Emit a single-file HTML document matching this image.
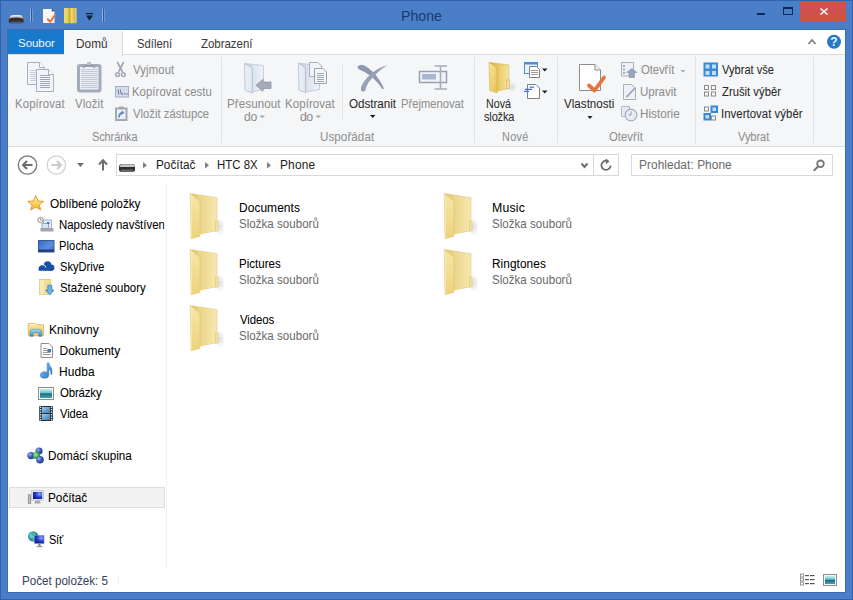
<!DOCTYPE html>
<html><head><meta charset="utf-8">
<style>
*{margin:0;padding:0;box-sizing:border-box}
html,body{width:853px;height:600px;overflow:hidden;background:#4a7fc8;font-family:"Liberation Sans",sans-serif;font-size:11.5px;color:#1e1e1e}
.a{position:absolute}
.t{position:absolute;white-space:pre;line-height:16px;font-family:"Liberation Sans",sans-serif;-webkit-text-stroke:0.05px currentColor}
svg{position:absolute;overflow:visible}
#frame{position:absolute;left:0;top:0;width:853px;height:600px;background:#4a7fc8;border:1px solid #3063ab}
#tabs{left:8px;top:30px;width:837px;height:25px;background:#fff;border-bottom:1px solid #dadbdc}
#soubor{left:8px;top:30px;width:56px;height:24px;background:#1979ca}
#domu{left:64px;top:31px;width:59px;height:25px;background:#f5f6f7;border-right:1px solid #dadbdc}
#ribbon{left:8px;top:55px;width:837px;height:92px;background:#f5f6f7;border-bottom:1px solid #dadbdc}
.sep{position:absolute;width:1px;background:#e2e3e4}
#addr{left:8px;top:147px;width:837px;height:36px;background:#fff}
#main{left:8px;top:183px;width:837px;height:409px;background:#fff}
#navsep{left:166px;top:184px;width:1px;height:384px;background:#f2f2f2}
#abox{left:116px;top:154px;width:478px;height:22px;border:1px solid #d9d9d9;background:#fff}
#rbox{left:593px;top:154px;width:26px;height:22px;border:1px solid #d9d9d9;background:#fff}
#sbox{left:631px;top:154px;width:202px;height:22px;border:1px solid #d9d9d9;background:#fff}
#selnav{left:9px;top:487px;width:156px;height:21px;background:#f2f2f2;border:1px solid #dedede}
#close{left:800px;top:1px;width:46px;height:20px;background:#cf524c}
#cborder{left:7px;top:29px;width:839px;height:564px;border:1px solid #3c6cb2}

</style></head><body>
<div id="frame"></div>
<div class="a" id="cborder"></div>
<div class="a" id="close"></div>
<div class="a" id="tabs"></div>
<div class="a" id="soubor"></div>
<div class="a" id="ribbon"></div>
<div class="a" id="domu"></div>
<div class="sep" style="left:221px;top:57px;height:86px"></div>
<div class="sep" style="left:342px;top:65px;height:54px"></div>
<div class="sep" style="left:474px;top:57px;height:86px"></div>
<div class="sep" style="left:557px;top:57px;height:86px"></div>
<div class="sep" style="left:695px;top:57px;height:86px"></div>
<div class="sep" style="left:813px;top:57px;height:86px"></div>
<div class="a" id="addr"></div>
<div class="a" id="main"></div>
<div class="a" id="navsep"></div>
<div class="a" id="abox"></div>
<div class="a" id="rbox"></div>
<div class="a" id="sbox"></div>
<div class="a" id="selnav"></div>
<div class="a" id="stsep" style="left:118px;top:575px;width:1px;height:11px;background:#f2f2f2"></div>

<svg style="left:0;top:0" width="853" height="600" viewBox="0 0 853 600">
<defs>
<linearGradient id="gFold" x1="0" y1="0" x2="1" y2="0"><stop offset="0" stop-color="#f6e39b"/><stop offset="1" stop-color="#ecd07a"/></linearGradient>
<linearGradient id="gBack" x1="0" y1="0" x2="1" y2="0"><stop offset="0" stop-color="#e2c265"/><stop offset="0.5" stop-color="#efd888"/><stop offset="1" stop-color="#f3e3a6"/></linearGradient>
<linearGradient id="gNF" x1="0" y1="0" x2="1" y2="0"><stop offset="0" stop-color="#f2d877"/><stop offset="1" stop-color="#e9c24f"/></linearGradient>
<linearGradient id="gNB" x1="0" y1="0" x2="1" y2="0"><stop offset="0" stop-color="#d9a93a"/><stop offset="0.45" stop-color="#f0d478"/><stop offset="1" stop-color="#f6e7a8"/></linearGradient>
<linearGradient id="gGF" x1="0" y1="0" x2="1" y2="0"><stop offset="0" stop-color="#eef2f9"/><stop offset="1" stop-color="#dfe6f1"/></linearGradient>
<linearGradient id="gGB" x1="0" y1="0" x2="1" y2="0"><stop offset="0" stop-color="#c2ccdc"/><stop offset="0.45" stop-color="#dde4ef"/><stop offset="1" stop-color="#eef2f8"/></linearGradient>
<radialGradient id="gShadow" cx="0.5" cy="0.5" r="0.5"><stop offset="0" stop-color="#9aa6bd" stop-opacity="0.55"/><stop offset="1" stop-color="#9aa6bd" stop-opacity="0"/></radialGradient>
<linearGradient id="gStar" x1="0" y1="0" x2="0" y2="1"><stop offset="0" stop-color="#fff3a0"/><stop offset="1" stop-color="#f3b42a"/></linearGradient>
<linearGradient id="gDesk" x1="0" y1="0" x2="1" y2="1"><stop offset="0" stop-color="#3566c4"/><stop offset="0.6" stop-color="#5b8fe0"/><stop offset="1" stop-color="#2f5fb8"/></linearGradient>
<linearGradient id="gPic" x1="0" y1="0" x2="0" y2="1"><stop offset="0" stop-color="#dff3fb"/><stop offset="0.45" stop-color="#8fcbe0"/><stop offset="1" stop-color="#2b6f7a"/></linearGradient>
</defs>

<!-- ===== title bar ===== -->
<defs><linearGradient id="drvTop" x1="0" y1="0" x2="0" y2="1"><stop offset="0" stop-color="#f2f2f2"/><stop offset="1" stop-color="#8a8a8a"/></linearGradient></defs>
<path d="M8.8,19.5 Q8.8,15.5 13,15.2 H19.3 Q23.5,15.5 23.5,19.5 V21.5 Q23.5,23.2 21.8,23.2 H10.5 Q8.8,23.2 8.8,21.5 Z" fill="#2e2e2e"/>
<path d="M9,19.2 Q9.5,15.2 13,15.1 H19.3 Q23,15.2 23.4,19.2 Q22,17.6 16.2,17.6 Q10.4,17.6 9,19.2 Z" fill="url(#drvTop)"/>
<path d="M10.5,22.2 H22" stroke="#6f6f6f" stroke-width="1"/>
<rect x="30" y="9" width="1" height="13" fill="#8fb0e0"/><rect x="31" y="9" width="1" height="13" fill="#2f5b9e"/><rect x="32" y="9" width="1" height="13" fill="#6c96d4"/>
<rect x="102" y="9" width="1" height="13" fill="#8fb0e0"/><rect x="103" y="9" width="1" height="13" fill="#2f5b9e"/><rect x="104" y="9" width="1" height="13" fill="#6c96d4"/>
<path d="M43,9 H51.5 L54.5,12 V23 H43 Z" fill="#fbf6f4"/>
<circle cx="52.6" cy="10.6" r="1" fill="#2a3a55"/>
<path d="M47.8,19.2 L50.2,21.8 L55,15" fill="none" stroke="#e8743b" stroke-width="2" stroke-linecap="round" stroke-linejoin="round"/>
<defs><linearGradient id="qaF" x1="0" y1="0" x2="1" y2="0"><stop offset="0" stop-color="#f0dc78"/><stop offset="0.3" stop-color="#e8cf5a"/><stop offset="0.45" stop-color="#c9a83a"/><stop offset="0.6" stop-color="#efd970"/><stop offset="0.85" stop-color="#d8b848"/><stop offset="1" stop-color="#f2e290"/></linearGradient></defs>
<rect x="64" y="8" width="12.5" height="15.3" rx="0.8" fill="url(#qaF)"/>
<rect x="86" y="13" width="7" height="1.2" fill="#0f1f3a"/>
<path d="M86,15.5 H93 L89.5,20.5 Z" fill="#0f1f3a"/>
<rect x="757" y="13" width="8" height="2" fill="#10295a"/>
<rect x="783.5" y="7.5" width="9" height="7" fill="none" stroke="#10295a" stroke-width="1"/>
<rect x="783" y="7" width="10" height="2" fill="#10295a"/>
<path d="M820.5,8.5 L827.5,14.5 M827.5,8.5 L820.5,14.5" stroke="#fff" stroke-width="1.6"/>
<!-- collapse + help -->
<path d="M808.5,44 L812,40 L815.5,44" fill="none" stroke="#7a7a7a" stroke-width="1.6"/>
<circle cx="834" cy="41.8" r="7" fill="#2a77c6"/>
<text x="834" y="46.3" font-family="Liberation Sans" font-weight="bold" font-size="12" fill="#e8f4ff" text-anchor="middle">?</text>

<!-- ===== ribbon: clipboard ===== -->
<g stroke="#aab0ba" stroke-width="1" fill="#f1f4fa">
<path d="M27.5,62.5 H39.5 L44.5,67.5 V84.5 H27.5 Z"/>
<path d="M36.5,69.5 H48.5 L53.5,74.5 V91.5 H36.5 Z"/>
</g>
<path d="M39.5,62.5 V67.5 H44.5" fill="#fff" stroke="#aab0ba"/>
<path d="M48.5,69.5 V74.5 H53.5" fill="#fff" stroke="#aab0ba"/>
<g stroke="#c9cfd8" stroke-width="1"><path d="M30,70.5H36 M30,72.5H36 M30,74.5H36 M30,76.5H36 M30,78.5H36 M30,80.5H36"/></g>
<g stroke="#9ea6b2" stroke-width="1"><path d="M40,75.5H50 M40,77.5H50 M40,79.5H50 M40,81.5H50 M40,83.5H50 M40,85.5H50 M40,87.5H50"/></g>
<rect x="78.5" y="65.5" width="21.5" height="25.5" rx="1.5" fill="#e9eef6" stroke="#a3acb9" stroke-width="3"/>
<g stroke="#c3cad5" stroke-width="1"><path d="M81,69.5H97.5 M81,71.5H97.5 M81,73.5H97.5 M81,75.5H97.5 M81,77.5H97.5 M81,79.5H97.5 M81,81.5H97.5 M81,83.5H97.5 M81,85.5H97.5 M81,87.5H97.5"/></g>
<path d="M83,67.5 Q89,63 95,67.5" fill="none" stroke="#8d96a4" stroke-width="1.5"/>
<rect x="87" y="62" width="4" height="3" fill="#b9c0ca"/>
<!-- scissors -->
<g stroke="#a2aab6" fill="none">
<path d="M117.3,62 L122.5,72 M123.7,62 L118.5,72" stroke-width="1.7"/>
<circle cx="117.6" cy="74.6" r="1.9" stroke-width="1.5"/><circle cx="123.4" cy="74.6" r="1.9" stroke-width="1.5"/>
</g>
<rect x="115.5" y="86.5" width="13" height="10.5" fill="#d6ddee" stroke="#a3aec4"/>
<path d="M117.8,89.5 L119,94.5 M120.2,89.5 L121.4,94.5" stroke="#5f6886" stroke-width="0.9"/>
<g fill="#5f6886"><rect x="122" y="93.3" width="1.2" height="1.2"/><rect x="124.2" y="93.3" width="1.2" height="1.2"/><rect x="126.4" y="93.3" width="1.2" height="1.2"/></g>
<rect x="116" y="108.5" width="10.5" height="11.5" fill="#eef2f8" stroke="#a2a9b4" stroke-width="2"/>
<rect x="119" y="106.5" width="4.5" height="2.5" fill="#a2a9b4"/>
<path d="M119,117.5 Q119,113 123.5,112.5" fill="none" stroke="#6a8bc0" stroke-width="1.8"/>
<path d="M121.5,110.5 L124.5,112.5 L121.5,115 Z" fill="#6a8bc0"/>

<!-- ===== ribbon: organize ===== -->
<g fill="#a8a8a8"><path d="M259.5,115.5 H265 L262.25,118.3 Z"/><path d="M315.5,115.5 H321 L318.25,118.3 Z"/><path d="M680.5,70 H685.5 L683,72.6 Z"/></g>
<path d="M244.8,63.5 L263.5,65.5 V89.5 L252,92 V67.5 Z" fill="url(#gGB)" stroke="#bcc4d1" stroke-width="0.8"/>
<path d="M244.5,63.5 L252.3,67.8 V93 L245,90.3 Z" fill="url(#gGF)" stroke="#b4bccb" stroke-width="0.8"/>
<path d="M256,85.3 L263,79.3 V82 H271 V88.5 H263 V91.3 Z" fill="#a3abb9" stroke="#8f97a6" stroke-width="0.8"/>
<path d="M298.8,63.3 L319.5,65.5 V89.5 L305.5,92 V67.5 Z" fill="url(#gGB)" stroke="#bcc4d1" stroke-width="0.8"/>
<path d="M298.5,63.3 L305.5,67.8 V92.7 L299,90 Z" fill="url(#gGF)" stroke="#b4bccb" stroke-width="0.8"/>
<path d="M309.5,62.5 H318 L321.5,66 V76.5 H309.5 Z" fill="#f1f4fa" stroke="#aab0ba"/>
<path d="M314.5,68.5 H323 L326.5,72 V83.5 H314.5 Z" fill="#f3f6fb" stroke="#9aa2ae"/>
<g stroke="#9ea6b2"><path d="M317,73.5H324 M317,75.5H324 M317,77.5H324 M317,79.5H324 M317,81.5H324"/></g>
<!-- delete X -->
<path d="M357.5,67 C359,64.5 362.5,64.5 366,66.5 C374,71 380,80 384,88.5 L382.5,89.2 C377,81 370,74.5 362,70.8 C359.5,69.8 357.5,69 357.5,67 Z" fill="#8e99b1"/>
<path d="M387.5,65.2 C378,67.5 371,73 366,79 C362.5,83 360.5,87 361,90 C361.5,92 365,92 365.5,90 C366,87 367.5,83.5 370.5,80 C375.5,74 381,69 387.5,65.2 Z" fill="#97a2b9"/>
<path d="M370,115 H375.5 L372.75,118 Z" fill="#1e1e1e"/>
<!-- rename -->
<rect x="419.5" y="71.5" width="27" height="11" fill="#f0f4fa" stroke="#9aa1ad" stroke-width="1.5"/>
<rect x="422" y="74" width="14" height="5.5" fill="#a9b8d0"/>
<g stroke="#a6adb8" stroke-width="1.6" fill="none"><path d="M440.5,66 V89 M434.5,66 H447 M434.5,89 H447"/></g>

<!-- ===== ribbon: new ===== -->
<defs>
<linearGradient id="nFlap" x1="0" y1="0" x2="1" y2="1"><stop offset="0" stop-color="#f8e49a"/><stop offset="1" stop-color="#e8c255"/></linearGradient>
<linearGradient id="nBack" x1="0" y1="0" x2="1" y2="0"><stop offset="0" stop-color="#c99a2e"/><stop offset="0.4" stop-color="#e8c560"/><stop offset="1" stop-color="#f6e6a2"/></linearGradient>
</defs>
<ellipse cx="512" cy="87" rx="5" ry="5" fill="url(#fSh)"/>
<path d="M489.3,62.5 L508.8,65 V88.5 L497,91 V67.5 Z" fill="url(#nBack)" stroke="#d3b050" stroke-width="0.6"/>
<rect x="506.8" y="80" width="2.4" height="8.5" fill="#f5e3a0" stroke="#caa040" stroke-width="0.5"/>
<path d="M489,62.5 L497,67.5 V93 L489.8,90.5 Z" fill="url(#nFlap)" stroke="#d6b04c" stroke-width="0.6"/>
<rect x="524.5" y="62.5" width="13" height="11" fill="#e9f2fb" stroke="#4a90d0"/>
<rect x="524.5" y="62.5" width="13" height="2" fill="#4a90d0"/>
<path d="M529.5,66.5 H536.5 L539.5,69.5 V77.5 H529.5 Z" fill="#fff" stroke="#808080"/>
<g stroke="#9a9a9a"><path d="M531,70.5H538 M531,72.5H538 M531,74.5H538"/></g>
<path d="M542,68.5 H547.5 L544.75,71.5 Z" fill="#1e1e1e"/>
<path d="M527.5,84.5 H536 L539.5,88 V98.5 H527.5 Z" fill="#fff" stroke="#808080"/>
<g stroke="#2f7dd1" stroke-width="1.2"><path d="M529.5,87.2 H534 M525,89.3 H532 M524,91.3 H529"/></g>
<path d="M542,90.5 H547.5 L544.75,93.5 Z" fill="#1e1e1e"/>

<!-- ===== ribbon: open ===== -->
<path d="M579.5,64.5 H595 L600.5,70 V90.5 H579.5 Z" fill="#fff" stroke="#8d8d8d"/>
<path d="M595,64.5 V70 H600.5" fill="#f2f2f2" stroke="#8d8d8d"/>
<path d="M589,85.5 L594.5,90.5 L604,77.5" fill="none" stroke="#e8743b" stroke-width="3.8" stroke-linecap="round" stroke-linejoin="round"/>
<path d="M587.5,116 H592.5 L590,119 Z" fill="#1e1e1e"/>
<rect x="621.5" y="62.5" width="12" height="13.5" fill="#eef2f8" stroke="#a9b0bb"/>
<g fill="#a9b0bb"><rect x="623" y="65" width="2" height="2"/><rect x="623" y="68.5" width="2" height="2"/><rect x="623" y="72" width="2" height="2"/></g>
<path d="M626.5,72.5 L631.75,68.5 L637,72.5 H634.5 V77.5 H629 V72.5 Z" fill="#97a4bb" stroke="#8593ad" stroke-width="0.6"/>
<path d="M623.5,84.5 H631.5 L635.5,88.5 V99.5 H623.5 Z" fill="#eef2f8" stroke="#a9b0bb"/>
<path d="M626.5,97 L635.5,87.5" stroke="#9aa3b3" stroke-width="1.8"/>
<path d="M621.5,106.5 H629.5 V116.5 H621.5 Z" fill="#e3e9f3" stroke="#b4bbc6"/>
<circle cx="631" cy="115" r="5.8" fill="#e8edf5" stroke="#a4acb9" stroke-width="1.2"/>
<path d="M631,111.5 V115 H628.5" fill="none" stroke="#8f98a8" stroke-width="1"/>

<!-- ===== ribbon: select ===== -->
<rect x="703.5" y="62.5" width="14.5" height="14" fill="#3a89d6"/>
<g fill="#bfe1f8"><rect x="705.5" y="64.5" width="4" height="4"/><rect x="712" y="64.5" width="4" height="4"/><rect x="705.5" y="71" width="4" height="4"/><rect x="712" y="71" width="4" height="4"/></g>
<g fill="none" stroke="#8c8c8c" stroke-width="1"><rect x="704.5" y="85.5" width="4" height="4"/><rect x="711.5" y="85.5" width="4" height="4"/><rect x="704.5" y="92" width="4" height="4"/><rect x="711.5" y="92" width="4" height="4"/>
<rect x="704.5" y="107" width="4" height="4"/><rect x="711.5" y="116" width="4" height="4"/></g>
<rect x="710.5" y="105.5" width="7.5" height="7.5" fill="#3a89d6"/><rect x="712.5" y="107.5" width="3.5" height="3.5" fill="#bfe1f8"/>
<rect x="703.5" y="113" width="7.5" height="7.5" fill="#3a89d6"/><rect x="705.5" y="115" width="3.5" height="3.5" fill="#bfe1f8"/>

<!-- ===== address row ===== -->
<circle cx="27.5" cy="165" r="9.2" fill="none" stroke="#777" stroke-width="1.3"/>
<path d="M23,165 H32.5 M27,161 L23,165 L27,169" fill="none" stroke="#6d6d6d" stroke-width="2"/>
<circle cx="56.3" cy="165" r="9.2" fill="none" stroke="#d2d2d2" stroke-width="1.3"/>
<path d="M61,165 H51.5 M57,161 L61,165 L57,169" fill="none" stroke="#cacaca" stroke-width="2"/>
<path d="M77,163 H84 L80.5,167 Z" fill="#6d6d6d"/>
<path d="M103,170.5 V160.5 M99,164.5 L103,160.3 L107,164.5" fill="none" stroke="#6d6d6d" stroke-width="2"/>
<path d="M119,167 Q119,164 122,164 H132 Q135,164 135,167 V170 Q135,171.7 133,171.7 H121 Q119,171.7 119,170 Z" fill="#2f2f2f"/>
<path d="M119.5,167 Q120,164.2 122,164.2 H132 Q134.5,164.2 134.8,167 Z" fill="#c9c9c9"/>
<rect x="121" y="169.5" width="12" height="1.5" fill="#6a6a6a"/>
<g fill="#808080"><path d="M143,162 L147,165.2 L143,168.4 Z"/><path d="M205,162 L209,165.2 L205,168.4 Z"/><path d="M267,162 L271,165.2 L267,168.4 Z"/></g>
<path d="M581.5,163.5 L584.5,167 L587.5,163.5" fill="none" stroke="#6d6d6d" stroke-width="2"/>
<path d="M606.3,160.7 A4.6,4.6 0 1 0 610.6,165.5" fill="none" stroke="#6d6d6d" stroke-width="1.8"/>
<path d="M605.8,158.5 L609.6,161.3 L605.8,164.3 Z" fill="#6d6d6d"/>
<circle cx="820.5" cy="163.8" r="3.3" fill="none" stroke="#777" stroke-width="1.8"/>
<path d="M818,166.5 L813.8,170.7" stroke="#777" stroke-width="2"/>

<!-- ===== nav icons ===== -->
<path d="M35.7,195.5 L38,201 L43.7,201.3 L39.3,205 L40.8,210 L35.7,207.2 L30.6,210 L32.1,205 L27.7,201.3 L33.4,201 Z" fill="url(#gStar)" stroke="#d98f26" stroke-width="0.8"/>
<!-- recent -->
<rect x="40.5" y="228" width="13" height="3.5" fill="#a3a7ad"/>
<rect x="43.5" y="220" width="8" height="8.5" fill="#e3eef8" stroke="#9aa6b4" stroke-width="0.8"/>
<rect x="42" y="223.5" width="6.5" height="5" fill="#d6e6f5" stroke="#8b9bb0" stroke-width="0.8"/>
<rect x="47" y="222" width="2.5" height="2" fill="#3b82c8"/>
<circle cx="40.5" cy="220" r="2.7" fill="#f6f6f6" stroke="#8a8a8a" stroke-width="0.9"/>
<path d="M40.5,218.5 V220 H41.8" fill="none" stroke="#6a6a6a" stroke-width="0.7"/>
<!-- desktop -->
<rect x="38.5" y="240.5" width="15.5" height="11.5" fill="url(#gDesk)" stroke="#3b5a8e" stroke-width="1"/>
<rect x="38.5" y="249.5" width="15.5" height="2.5" fill="#25407a"/>
<!-- skydrive cloud -->
<g fill="#1b4ea6"><circle cx="47.6" cy="265" r="3.7"/><circle cx="51.3" cy="267.7" r="3.1"/><rect x="45" y="266" width="6.5" height="4.8"/></g>
<path d="M38.6,268.8 A3.7,3.7 0 0 1 45.8,267.6" fill="none" stroke="#fff" stroke-width="1.2"/>
<path d="M38.6,270.8 V268.8 A3.6,3.6 0 0 1 45.6,267.6 V270.8 Z" fill="#1b4ea6"/>
<!-- downloads -->
<defs><linearGradient id="dlA" x1="0" y1="0" x2="1" y2="0"><stop offset="0" stop-color="#2f8ad0"/><stop offset="0.5" stop-color="#6cc4f4"/><stop offset="1" stop-color="#2f7fc8"/></linearGradient></defs>
<rect x="39.3" y="279.3" width="11.5" height="15" fill="#eedc98" stroke="#d4bc6a" stroke-width="0.6"/>
<rect x="39.8" y="280" width="4.5" height="14" fill="#f6e9b4"/>
<path d="M47.8,285.2 H51.8 V290 H54 L49.8,294.8 L45.6,290 H47.8 Z" fill="url(#dlA)" stroke="#2a6aa8" stroke-width="0.6"/>
<!-- libraries -->
<defs><linearGradient id="libY" x1="0" y1="0" x2="0" y2="1"><stop offset="0" stop-color="#f8e8a8"/><stop offset="1" stop-color="#e9c765"/></linearGradient>
<linearGradient id="libB" x1="0" y1="0" x2="0" y2="1"><stop offset="0" stop-color="#a8e0f8"/><stop offset="1" stop-color="#2f86c0"/></linearGradient></defs>
<path d="M28.3,323.5 H35.5 L36.5,324.8 H43.5 V335.8 H28.3 Z" fill="url(#libY)" stroke="#cfad55" stroke-width="0.7"/>
<rect x="30.5" y="324" width="4.5" height="1.2" fill="#fff6d0"/>
<path d="M30,336.3 V331.5 Q30,329.3 32.5,329.3 H39.2 Q41.7,329.3 41.7,331.5 V336.3 H38.6 V333.8 Q38.6,332.5 37.3,332.5 H34.4 Q33.1,332.5 33.1,333.8 V336.3 Z" fill="url(#libB)" stroke="#3a7aa8" stroke-width="0.5"/>
<!-- documents -->
<path d="M41,343.5 H49 L52.5,347 V357.5 H41 Z" fill="#fff" stroke="#8f8f8f"/>
<g stroke="#9a9a9a"><path d="M43,348.5H47 M43,350.5H50.5 M43,352.5H50.5 M43,354.5H50.5"/></g>
<rect x="47.5" y="349" width="3.5" height="3" fill="#3f7cc7"/>
<!-- music -->
<defs><linearGradient id="musB" x1="0" y1="0" x2="1" y2="1"><stop offset="0" stop-color="#8fd0f8"/><stop offset="1" stop-color="#1f6fc0"/></linearGradient></defs>
<path d="M47.2,363 L48.8,362.8 Q49.2,365.5 51,367.5 Q52.5,369.5 51.8,374.5 L51,374.5 Q51.2,370.5 48.8,368.5 V375 Q48.8,378.2 44.3,378.3 Q40.4,378.3 40.4,375.3 Q40.4,372 44.5,371.8 Q46.3,371.8 47.2,372.4 Z" fill="url(#musB)" stroke="#2a6cb0" stroke-width="0.5"/>
<!-- pictures -->
<defs><linearGradient id="picL" x1="0" y1="0" x2="0" y2="1"><stop offset="0" stop-color="#c8f0f4"/><stop offset="0.4" stop-color="#6cc4cf"/><stop offset="0.55" stop-color="#1f6a6a"/><stop offset="0.75" stop-color="#2f8aa0"/><stop offset="1" stop-color="#3fa0c0"/></linearGradient>
<linearGradient id="vidL" x1="0" y1="0" x2="1" y2="1"><stop offset="0" stop-color="#9fd0f0"/><stop offset="0.6" stop-color="#5a9ad0"/><stop offset="1" stop-color="#8a6a70"/></linearGradient></defs>
<rect x="38.5" y="387.5" width="15" height="12" fill="#fafafa" stroke="#8c8c8c"/>
<rect x="40" y="389" width="12" height="9" fill="url(#picL)"/>
<!-- videos -->
<rect x="39.2" y="406" width="13.7" height="15" rx="0.8" fill="#26303a"/>
<rect x="42" y="407" width="8" height="6" fill="url(#vidL)"/><rect x="42" y="414" width="8" height="6" fill="url(#vidL)"/>
<g fill="#f0f4f8"><circle cx="40.6" cy="407.3" r="0.75"/><circle cx="51.5" cy="407.3" r="0.75"/><circle cx="40.6" cy="409.8" r="0.75"/><circle cx="51.5" cy="409.8" r="0.75"/><circle cx="40.6" cy="412.3" r="0.75"/><circle cx="51.5" cy="412.3" r="0.75"/><circle cx="40.6" cy="414.8" r="0.75"/><circle cx="51.5" cy="414.8" r="0.75"/><circle cx="40.6" cy="417.3" r="0.75"/><circle cx="51.5" cy="417.3" r="0.75"/><circle cx="40.6" cy="419.8" r="0.75"/><circle cx="51.5" cy="419.8" r="0.75"/></g>
<!-- homegroup -->
<defs><radialGradient id="hgB" cx="0.35" cy="0.35" r="0.7"><stop offset="0" stop-color="#9fb8f0"/><stop offset="0.5" stop-color="#3d5cb8"/><stop offset="1" stop-color="#233a8a"/></radialGradient>
<radialGradient id="hgG" cx="0.4" cy="0.4" r="0.7"><stop offset="0" stop-color="#b6f0a0"/><stop offset="0.5" stop-color="#3fae4a"/><stop offset="1" stop-color="#1f7a30"/></radialGradient>
<radialGradient id="scr" cx="0.7" cy="0.3" r="0.9"><stop offset="0" stop-color="#8fa8ff"/><stop offset="0.5" stop-color="#2438c8"/><stop offset="1" stop-color="#0a1478"/></radialGradient>
<radialGradient id="glb" cx="0.4" cy="0.4" r="0.7"><stop offset="0" stop-color="#a8f0d8"/><stop offset="0.5" stop-color="#2f9bb8"/><stop offset="1" stop-color="#1a5a8a"/></radialGradient></defs>
<circle cx="31" cy="455.6" r="3.7" fill="url(#hgB)"/>
<circle cx="39" cy="451" r="3.6" fill="url(#hgB)"/>
<circle cx="36.5" cy="455.5" r="3.6" fill="url(#hgG)"/>
<circle cx="40" cy="459.8" r="3.8" fill="url(#hgB)"/>
<!-- computer -->
<rect x="28.2" y="494.8" width="2.6" height="8.8" fill="#b9bdb6" stroke="#7c8078" stroke-width="0.6"/>
<rect x="31.8" y="490.6" width="11.6" height="9.6" fill="#e8ecf2" stroke="#aab2bc" stroke-width="0.6"/>
<rect x="33" y="492" width="9.2" height="7" fill="url(#scr)"/>
<path d="M35.5,500.5 H39.5 L40.8,503.6 H34.2 Z" fill="#a6a9ad"/>
<!-- network -->
<circle cx="33.2" cy="536.4" r="5.2" fill="url(#glb)"/>
<path d="M31,533.5 Q33,532 34.5,534 Q34,536 32,536.5 Z M32,538.5 Q34.5,538 35,540.5 L33,541 Z" fill="#3fbf6a"/>
<rect x="34.5" y="535.5" width="9.5" height="8" fill="url(#scr)" stroke="#7f8ac0" stroke-width="0.6"/>
<rect x="38.2" y="543.5" width="2.4" height="2.5" fill="#8a8a8a"/><rect x="36.5" y="546" width="6" height="1.2" fill="#9a9a9a"/>

<!-- ===== status icons ===== -->
<g fill="none" stroke="#8a8a8a" stroke-width="0.9"><rect x="800.5" y="574" width="3" height="3"/><rect x="800.5" y="578" width="3" height="3"/><rect x="800.5" y="582" width="3" height="3"/></g>
<g fill="#555"><rect x="805" y="575" width="4" height="1.2"/><rect x="810" y="575" width="4.5" height="1.2"/><rect x="805" y="579" width="4" height="1.2"/><rect x="810" y="579" width="4.5" height="1.2"/><rect x="805" y="583" width="4" height="1.2"/><rect x="810" y="583" width="4.5" height="1.2"/></g>
<rect x="823.5" y="574.5" width="13" height="11" fill="#f4f4f4" stroke="#8f8f8f"/>
<rect x="825" y="576" width="10" height="8" fill="url(#picL)"/>

<defs>
<linearGradient id="fFlap" x1="0" y1="0" x2="0" y2="1"><stop offset="0" stop-color="#f6e7a6"/><stop offset="1" stop-color="#eed27c"/></linearGradient>
<linearGradient id="fBack" x1="0" y1="0" x2="1" y2="0"><stop offset="0" stop-color="#dcbc62"/><stop offset="0.35" stop-color="#ecd58a"/><stop offset="1" stop-color="#f6e8b0"/></linearGradient>
<radialGradient id="fSh" cx="0.5" cy="0.5" r="0.5"><stop offset="0" stop-color="#a0a4b0" stop-opacity="0.35"/><stop offset="1" stop-color="#a0a4b0" stop-opacity="0"/></radialGradient>
<symbol id="fold" width="45" height="50" overflow="visible">
<ellipse cx="31" cy="34" rx="5" ry="9" fill="url(#fSh)"/>
<path d="M1.7,0.6 L28,4.7 V37.7 L11,41 V8.4 Z" fill="url(#fBack)" stroke="#e3ca7c" stroke-width="0.6"/>
<rect x="26.5" y="28" width="2.6" height="10" fill="#f3e1a0" stroke="#dcc06a" stroke-width="0.5"/>
<path d="M1.2,0.8 L11,8.4 V43.2 L2,45.8 Z" fill="url(#fFlap)" stroke="#e3c66e" stroke-width="0.6"/>
<path d="M2.2,2 V45" stroke="#f8ecb8" stroke-width="1"/>
</symbol>
</defs>
<use href="#fold" x="189" y="193"/>
<use href="#fold" x="189" y="249"/>
<use href="#fold" x="189" y="305"/>
<use href="#fold" x="443" y="193"/>
<use href="#fold" x="443" y="249"/>
</svg>

<span class="t" id="t0" style="left:401.00px;top:8px;font-size:14.5px;color:#1b3a72;letter-spacing:0.000px;transform:scaleX(0.9756);transform-origin:0 0;-webkit-text-stroke:0;">Phone</span>
<span class="t" id="t1" style="left:18.00px;top:35px;font-size:11.5px;color:#f0f8ff;letter-spacing:-0.080px;transform:scaleX(1.0054);transform-origin:0 0;-webkit-text-stroke:0;">Soubor</span>
<span class="t" id="t2" style="left:76.00px;top:36px;font-size:12px;color:#3b3b3b;letter-spacing:0.068px;transform:scaleX(0.9806);transform-origin:0 0;">Domů</span>
<span class="t" id="t3" style="left:137.00px;top:36px;font-size:12px;color:#3b3b3b;letter-spacing:0.018px;transform:scaleX(0.9378);transform-origin:0 0;">Sdílení</span>
<span class="t" id="t4" style="left:201.00px;top:36px;font-size:12px;color:#3b3b3b;letter-spacing:-0.026px;transform:scaleX(0.9556);transform-origin:0 0;">Zobrazení</span>
<span class="t" id="t5" style="left:15.00px;top:96px;font-size:12px;color:#8e8e8e;letter-spacing:0.119px;transform:scaleX(0.9471);transform-origin:0 0;">Kopírovat</span>
<span class="t" id="t6" style="left:74.50px;top:96px;font-size:12px;color:#8e8e8e;letter-spacing:0.105px;transform:scaleX(0.9500);transform-origin:0 0;">Vložit</span>
<span class="t" id="t7" style="left:132.50px;top:62px;font-size:12px;color:#8e8e8e;letter-spacing:0.160px;transform:scaleX(0.9386);transform-origin:0 0;">Vyjmout</span>
<span class="t" id="t8" style="left:131.50px;top:84px;font-size:12px;color:#8e8e8e;letter-spacing:0.099px;transform:scaleX(0.9410);transform-origin:0 0;">Kopírovat cestu</span>
<span class="t" id="t9" style="left:132.50px;top:106px;font-size:12px;color:#8e8e8e;letter-spacing:0.023px;transform:scaleX(0.9395);transform-origin:0 0;">Vložit zástupce</span>
<span class="t" id="t10" style="left:92.00px;top:129px;font-size:12px;color:#8f8f8f;letter-spacing:-0.155px;transform:scaleX(0.9200);transform-origin:0 0;">Schránka</span>
<span class="t" id="t11" style="left:227.00px;top:96px;font-size:12px;color:#8e8e8e;letter-spacing:0.078px;transform:scaleX(0.9667);transform-origin:0 0;">Přesunout</span>
<span class="t" id="t12" style="left:244.00px;top:109px;font-size:12px;color:#8e8e8e;letter-spacing:-0.394px;transform:scaleX(1.0154);transform-origin:0 0;">do</span>
<span class="t" id="t13" style="left:285.00px;top:96px;font-size:12px;color:#8e8e8e;letter-spacing:0.039px;transform:scaleX(0.9627);transform-origin:0 0;">Kopírovat</span>
<span class="t" id="t14" style="left:300.00px;top:109px;font-size:12px;color:#8e8e8e;letter-spacing:-0.600px;transform:scaleX(1.0308);transform-origin:0 0;">do</span>
<span class="t" id="t15" style="left:319.50px;top:129px;font-size:12px;color:#8f8f8f;letter-spacing:0.078px;transform:scaleX(0.9673);transform-origin:0 0;">Uspořádat</span>
<span class="t" id="t16" style="left:349.00px;top:96px;font-size:12px;color:#2a2a2a;letter-spacing:-0.026px;transform:scaleX(0.9714);transform-origin:0 0;">Odstranit</span>
<span class="t" id="t17" style="left:401.00px;top:96px;font-size:12px;color:#8e8e8e;letter-spacing:0.021px;transform:scaleX(0.9313);transform-origin:0 0;">Přejmenovat</span>
<span class="t" id="t18" style="left:486.00px;top:96px;font-size:12px;color:#2a2a2a;letter-spacing:0.000px;transform:scaleX(0.8889);transform-origin:0 0;">Nová</span>
<span class="t" id="t19" style="left:483.50px;top:109px;font-size:12px;color:#2a2a2a;letter-spacing:-0.153px;transform:scaleX(0.9147);transform-origin:0 0;">složka</span>
<span class="t" id="t20" style="left:501.50px;top:129px;font-size:12px;color:#8f8f8f;letter-spacing:0.332px;transform:scaleX(0.9036);transform-origin:0 0;">Nové</span>
<span class="t" id="t21" style="left:564.00px;top:96px;font-size:12px;color:#2a2a2a;letter-spacing:0.035px;transform:scaleX(0.9635);transform-origin:0 0;">Vlastnosti</span>
<span class="t" id="t22" style="left:640.50px;top:62px;font-size:12px;color:#8e8e8e;letter-spacing:-0.123px;transform:scaleX(0.9472);transform-origin:0 0;">Otevřít</span>
<span class="t" id="t23" style="left:640.00px;top:84px;font-size:12px;color:#8e8e8e;letter-spacing:-0.035px;transform:scaleX(0.9622);transform-origin:0 0;">Upravit</span>
<span class="t" id="t24" style="left:640.00px;top:106px;font-size:12px;color:#8e8e8e;letter-spacing:0.000px;transform:scaleX(0.9750);transform-origin:0 0;">Historie</span>
<span class="t" id="t25" style="left:609.00px;top:129px;font-size:12px;color:#8f8f8f;letter-spacing:0.000px;transform:scaleX(0.9444);transform-origin:0 0;">Otevřít</span>
<span class="t" id="t26" style="left:722.00px;top:62px;font-size:12px;color:#2a2a2a;letter-spacing:0.012px;transform:scaleX(0.9232);transform-origin:0 0;">Vybrat vše</span>
<span class="t" id="t27" style="left:722.00px;top:84px;font-size:12px;color:#2a2a2a;letter-spacing:0.039px;transform:scaleX(0.9333);transform-origin:0 0;">Zrušit výběr</span>
<span class="t" id="t28" style="left:721.00px;top:106px;font-size:12px;color:#2a2a2a;letter-spacing:0.028px;transform:scaleX(0.9506);transform-origin:0 0;">Invertovat výběr</span>
<span class="t" id="t29" style="left:738.00px;top:129px;font-size:12px;color:#8f8f8f;letter-spacing:-0.108px;transform:scaleX(0.9265);transform-origin:0 0;">Vybrat</span>
<span class="t" id="t30" style="left:155.50px;top:157px;font-size:12px;color:#1e1e1e;letter-spacing:0.051px;transform:scaleX(0.9769);transform-origin:0 0;">Počítač</span>
<span class="t" id="t31" style="left:217.00px;top:157px;font-size:12px;color:#1e1e1e;letter-spacing:0.000px;transform:scaleX(0.9524);transform-origin:0 0;">HTC 8X</span>
<span class="t" id="t32" style="left:280.00px;top:157px;font-size:12px;color:#1e1e1e;letter-spacing:0.202px;transform:scaleX(0.9882);transform-origin:0 0;">Phone</span>
<span class="t" id="t33" style="left:639.00px;top:157px;font-size:12px;color:#6d6d6d;letter-spacing:0.067px;transform:scaleX(0.9891);transform-origin:0 0;">Prohledat: Phone</span>
<span class="t" id="t34" style="left:50.00px;top:196px;font-size:12px;color:#000000;letter-spacing:-0.061px;transform:scaleX(0.9859);transform-origin:0 0;">Oblíbené položky</span>
<span class="t" id="t35" style="left:58.50px;top:217px;font-size:12px;color:#000000;letter-spacing:0.000px;transform:scaleX(0.9500);transform-origin:0 0;overflow:hidden;width:111px;">Naposledy navštívené</span>
<span class="t" id="t36" style="left:58.50px;top:238px;font-size:12px;color:#000000;letter-spacing:0.130px;transform:scaleX(0.9243);transform-origin:0 0;">Plocha</span>
<span class="t" id="t37" style="left:59.50px;top:259px;font-size:12px;color:#000000;letter-spacing:0.047px;transform:scaleX(0.9187);transform-origin:0 0;">SkyDrive</span>
<span class="t" id="t38" style="left:59.50px;top:280px;font-size:12px;color:#000000;letter-spacing:0.015px;transform:scaleX(0.9489);transform-origin:0 0;">Stažené soubory</span>
<span class="t" id="t39" style="left:49.00px;top:322px;font-size:12px;color:#000000;letter-spacing:0.043px;transform:scaleX(1.0020);transform-origin:0 0;">Knihovny</span>
<span class="t" id="t40" style="left:59.50px;top:343px;font-size:12px;color:#000000;letter-spacing:0.000px;transform:scaleX(1.0000);transform-origin:0 0;">Dokumenty</span>
<span class="t" id="t41" style="left:58.50px;top:364px;font-size:12px;color:#000000;letter-spacing:0.101px;transform:scaleX(0.9943);transform-origin:0 0;">Hudba</span>
<span class="t" id="t42" style="left:59.50px;top:385px;font-size:12px;color:#000000;letter-spacing:-0.175px;transform:scaleX(0.9545);transform-origin:0 0;">Obrázky</span>
<span class="t" id="t43" style="left:59.50px;top:406px;font-size:12px;color:#000000;letter-spacing:-0.081px;transform:scaleX(0.9300);transform-origin:0 0;">Videa</span>
<span class="t" id="t44" style="left:48.00px;top:448px;font-size:12px;color:#000000;letter-spacing:0.008px;transform:scaleX(0.9733);transform-origin:0 0;">Domácí skupina</span>
<span class="t" id="t45" style="left:48.00px;top:490px;font-size:12px;color:#000000;letter-spacing:-0.017px;transform:scaleX(0.9821);transform-origin:0 0;">Počítač</span>
<span class="t" id="t46" style="left:49.00px;top:532px;font-size:12px;color:#000000;letter-spacing:-0.324px;transform:scaleX(0.9250);transform-origin:0 0;">Síť</span>
<span class="t" id="t47" style="left:238.50px;top:200px;font-size:12px;color:#000000;letter-spacing:0.050px;transform:scaleX(0.9967);transform-origin:0 0;">Documents</span>
<span class="t" id="t48" style="left:238.50px;top:216px;font-size:12px;color:#6d6d6d;letter-spacing:0.032px;transform:scaleX(0.9610);transform-origin:0 0;">Složka souborů</span>
<span class="t" id="t49" style="left:238.50px;top:256px;font-size:12px;color:#000000;letter-spacing:0.045px;transform:scaleX(0.9558);transform-origin:0 0;">Pictures</span>
<span class="t" id="t50" style="left:238.50px;top:272px;font-size:12px;color:#6d6d6d;letter-spacing:0.032px;transform:scaleX(0.9610);transform-origin:0 0;">Složka souborů</span>
<span class="t" id="t51" style="left:239.50px;top:312px;font-size:12px;color:#000000;letter-spacing:-0.084px;transform:scaleX(0.9500);transform-origin:0 0;">Videos</span>
<span class="t" id="t52" style="left:238.50px;top:328px;font-size:12px;color:#6d6d6d;letter-spacing:0.032px;transform:scaleX(0.9610);transform-origin:0 0;">Složka souborů</span>
<span class="t" id="t53" style="left:492.00px;top:200px;font-size:12px;color:#000000;letter-spacing:0.196px;transform:scaleX(1.0194);transform-origin:0 0;">Music</span>
<span class="t" id="t54" style="left:492.00px;top:216px;font-size:12px;color:#6d6d6d;letter-spacing:0.032px;transform:scaleX(0.9610);transform-origin:0 0;">Složka souborů</span>
<span class="t" id="t55" style="left:492.00px;top:256px;font-size:12px;color:#000000;letter-spacing:0.076px;transform:scaleX(0.9852);transform-origin:0 0;">Ringtones</span>
<span class="t" id="t56" style="left:492.00px;top:272px;font-size:12px;color:#6d6d6d;letter-spacing:0.032px;transform:scaleX(0.9610);transform-origin:0 0;">Složka souborů</span>
<span class="t" id="t57" style="left:21.50px;top:573px;font-size:12px;color:#3a4560;letter-spacing:-0.007px;transform:scaleX(0.9693);transform-origin:0 0;">Počet položek: 5</span>
</body></html>
